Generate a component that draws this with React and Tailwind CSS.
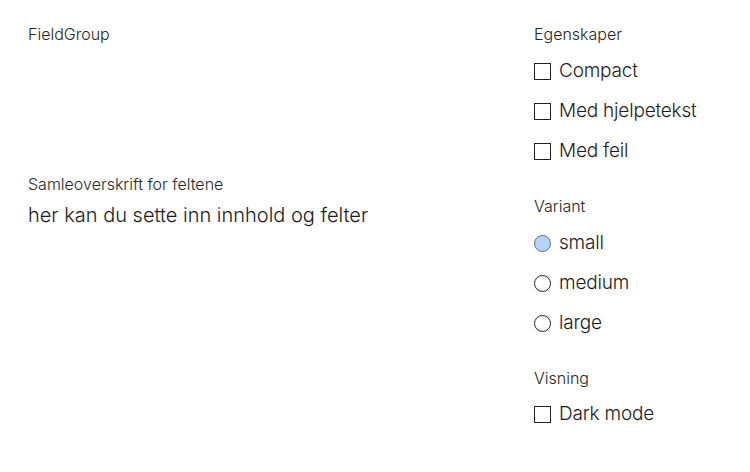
const font = { fontFamily: "Inter, 'Liberation Sans', sans-serif" };

function Check({ label }) {
  return (
    <label className="flex h-10 items-center gap-[8px]">
      <span className="block h-[17px] w-[17px] border border-[#1f1f1f] bg-white" />
      <span className="text-[19px] font-light leading-6 text-[#1b1b1b] tracking-[-0.2px]">{label}</span>
    </label>
  );
}

function Radio({ label, checked }) {
  return (
    <label className="flex h-10 items-center gap-[8px]">
      <span
        className={
          checked
            ? "block h-[17px] w-[17px] rounded-full border border-[#6b6b6b] bg-[#b4d2fa]"
            : "block h-[17px] w-[17px] rounded-full border border-[#1f1f1f] bg-white"
        }
      />
      <span className="text-[19px] font-light leading-6 text-[#1b1b1b] tracking-[-0.2px]">{label}</span>
    </label>
  );
}

function GroupLabel({ children, className = "" }) {
  return (
    <p className={"text-[16px] font-light leading-5 text-[#262626] tracking-[0px] " + className}>{children}</p>
  );
}

export default function App() {
  return (
    <div className="flex min-h-[472px] bg-white pl-7 pt-[24px]" style={font}>
      <div className="flex-1">
        <GroupLabel>FieldGroup</GroupLabel>
        <div className="mt-[130px]">
          <GroupLabel>Samleoverskrift for feltene</GroupLabel>
          <p className="mt-[7px] text-[20px] font-light leading-7 text-[#1b1b1b] tracking-[0px]">
            her kan du sette inn innhold og felter
          </p>
        </div>
      </div>
      <div className="w-[216px]">
        <GroupLabel>Egenskaper</GroupLabel>
        <div className="mt-[7px]">
          <Check label="Compact" />
          <Check label="Med hjelpetekst" />
          <Check label="Med feil" />
        </div>
        <GroupLabel className="mt-[25px]">Variant</GroupLabel>
        <div className="mt-[7px]">
          <Radio label="small" checked />
          <Radio label="medium" />
          <Radio label="large" />
        </div>
        <GroupLabel className="mt-[25px]">Visning</GroupLabel>
        <div className="mt-[6px]">
          <Check label="Dark mode" />
        </div>
      </div>
    </div>
  );
}
